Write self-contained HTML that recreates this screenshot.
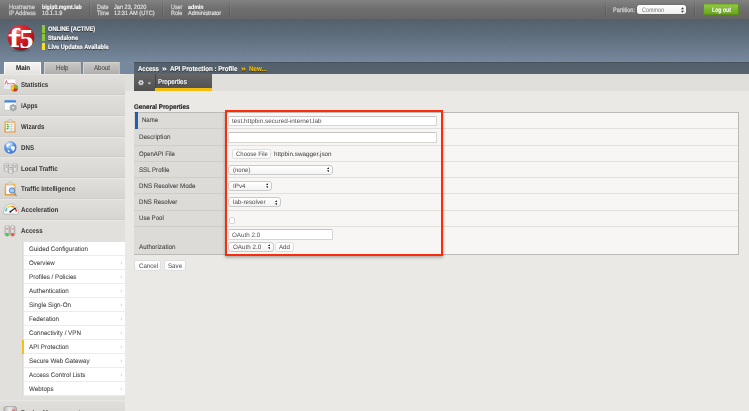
<!DOCTYPE html>
<html>
<head>
<meta charset="utf-8">
<title>BIG-IP - API Protection Profile</title>
<style>
html,body{margin:0;padding:0;}
html{width:749px;height:411px;overflow:hidden;background:#ebe9e6;}
body{width:749px;height:411px;overflow:hidden;position:relative;background:#ebe9e6;font-family:"Liberation Sans",Arial,sans-serif;font-size:6.5px;color:#333;}
*{box-sizing:border-box;}
.abs{position:absolute;}
#txl{position:absolute;left:0;top:0;width:749px;height:411px;will-change:transform;filter:blur(0.3px);}
#txl2{position:absolute;left:0;top:0;width:749px;height:411px;will-change:transform;transform:translateY(0.5px);}
.tx{text-rendering:geometricPrecision;-webkit-text-stroke:0.06px currentColor;position:absolute;white-space:nowrap;line-height:10px;height:10px;transform-origin:0 50%;}
#topbar{left:0;top:0;width:749px;height:20px;background:linear-gradient(#828282,#6f6f6f 45%,#666 100%);border-bottom:1px solid #5b5f64;}
.sep{position:absolute;top:2px;height:15px;width:2px;border-left:1px solid rgba(0,0,0,.1);border-right:1px solid rgba(255,255,255,.05);}
#header{left:0;top:20px;width:749px;height:55px;background:linear-gradient(#54606c 0,#5f6e7d 30%,#77899e 77%);}
#header .tex{position:absolute;left:0;top:0;right:0;bottom:0;background:repeating-linear-gradient(135deg,rgba(255,255,255,0.009) 0,rgba(255,255,255,0.009) 1px,rgba(0,0,0,0.009) 1px,rgba(0,0,0,0.009) 2px);}
.sb{position:absolute;left:42.1px;width:2.7px;}
.tab{position:absolute;top:62.3px;height:12.6px;width:37.2px;background:linear-gradient(#c9c8c5,#adacaa);border:1px solid #d3d2cf;border-bottom:none;border-right-color:#c0bfbc;}
.tab.act{background:linear-gradient(#f6f5f3,#e2e0dd);border-color:#fbfbfa;height:12.6px;}
#crumb{left:133.8px;top:62px;width:616px;height:12.4px;background:linear-gradient(#535f6b,#57636f);border-top:1px solid #48525d;}
#sidebar{left:0;top:74.4px;width:125px;height:337px;background:#dcdad6;}
.mi{position:absolute;left:0;width:125px;border-top:1px solid #e8e7e4;border-bottom:1px solid #d0ceca;background:linear-gradient(#e1dfdc,#d7d5d1);}
.mi.act{background:#e2e0dd;border-bottom:none;}
#sub{left:23.6px;top:241.6px;width:101.4px;height:154.2px;background:#fff;box-shadow:-1px 0 0 #e6e5e2,-2px 0 0 #dad8d4;}
.si{position:absolute;left:23.6px;width:101.4px;height:14.03px;border-bottom:1px solid #edecea;}
#menubar{left:133.8px;top:74.4px;width:78.2px;height:16.8px;background:linear-gradient(#666,#4f4f4f);}
.row{position:absolute;left:134px;width:604.4px;background:linear-gradient(90deg,#dddbd8 0,#dddbd8 91.5px,#cfcdca 91.5px,#cfcdca 92.3px,#f7f6f4 92.3px);}
.rb{position:absolute;left:134px;width:604.4px;height:1px;background:linear-gradient(90deg,#d0ceca 0,#d0ceca 92px,#e2e0dc 92px);}
.inp{position:absolute;background:#fff;border:1px solid #d7d5d2;border-top-color:#c6c4c1;border-radius:1.5px;}
.sel{position:absolute;background:linear-gradient(#fff,#f3f3f3);border:1px solid #c9c9c9;border-radius:3px;}
.ud{position:absolute;right:2.4px;top:1.3px;width:2.7px;height:5.4px;}
.btn{position:absolute;background:linear-gradient(#fff,#f9f9f9);border:1px solid #dedede;border-radius:2.5px;}
</style>
</head>
<body>

<!-- top bar -->
<div id="topbar" class="abs">
  <div class="sep" style="left:88.5px"></div>
  <div class="sep" style="left:162px"></div>
  <div class="sep" style="left:229px"></div>
  <div class="sep" style="left:604.7px"></div>
  <div class="sep" style="left:694.3px"></div>
  <div class="abs" style="left:637px;top:5.2px;width:49.2px;height:9px;background:linear-gradient(#fff,#efefef);border-radius:2.5px;box-shadow:0 0 1px #333">
    <svg class="abs" style="right:2.2px;top:1.6px" width="3" height="6" viewBox="0 0 3 6"><path d="M0 2.3L1.5 0.3L3 2.3zM0 3.7L1.5 5.7L3 3.7z" fill="#333"/></svg>
  </div>
  <div class="abs" style="left:702.8px;top:4.4px;width:36.6px;height:10.2px;background:linear-gradient(#8fc742,#69a51d);border:1px solid #5a8f18;border-top-color:#7db32e;border-radius:1.5px;"></div>
</div>

<!-- header -->
<div id="header" class="abs"><div class="tex"></div></div>

<!-- logo -->
<svg class="abs" style="left:2px;top:20px" width="40" height="36" viewBox="2 20 40 36">
  <defs>
    <radialGradient id="lg" cx="36%" cy="26%" r="80%">
      <stop offset="0" stop-color="#f27a82"/>
      <stop offset="0.28" stop-color="#de2a37"/>
      <stop offset="0.7" stop-color="#c0141f"/>
      <stop offset="1" stop-color="#840a12"/>
    </radialGradient>
    <radialGradient id="sh" cx="50%" cy="50%" r="50%">
      <stop offset="0" stop-color="#1a2430" stop-opacity="0.55"/>
      <stop offset="1" stop-color="#1a2430" stop-opacity="0"/>
    </radialGradient>
    <clipPath id="ball"><ellipse cx="21" cy="37.5" rx="13.3" ry="12.8"/></clipPath>
  </defs>
  <ellipse cx="21" cy="50.2" rx="11" ry="2.6" fill="url(#sh)"/>
  <ellipse cx="21" cy="37.5" rx="13.3" ry="12.8" fill="url(#lg)"/>
  <g clip-path="url(#ball)" fill="#fff">
    <text x="9.6" y="47" font-family="Liberation Serif,serif" font-weight="bold" font-size="27" textLength="10.5" lengthAdjust="spacingAndGlyphs">f</text>
    <rect x="8.6" y="34.3" width="12" height="2.1"/>
    <rect x="10.4" y="45.6" width="8.6" height="1.5"/>
    <text x="19.6" y="48" font-family="Liberation Serif,serif" font-weight="bold" font-size="26.5" textLength="14" lengthAdjust="spacingAndGlyphs">5</text>
  </g>
</svg>

<!-- status -->
<div class="sb" style="top:25px;height:7.5px;background:#8cc63f"></div>
<div class="sb" style="top:33.9px;height:6.8px;background:#8cc63f"></div>
<div class="sb" style="top:43px;height:6.8px;background:#f5e21a"></div>

<!-- tabs -->
<div class="tab act" style="left:4px"></div>
<div class="tab" style="left:43.7px"></div>
<div class="tab" style="left:83.2px"></div>

<!-- breadcrumb -->
<div id="crumb" class="abs"></div>

<div class="abs" style="left:125px;top:74.4px;width:624px;height:16.7px;background:#e1dfdc"></div>
<!-- sidebar -->
<div id="sidebar" class="abs"></div>
<div class="mi" style="top:74.4px;height:20.8px"></div>
<div class="mi" style="top:95.2px;height:20.8px"></div>
<div class="mi" style="top:116.0px;height:20.8px"></div>
<div class="mi" style="top:136.8px;height:20.6px"></div>
<div class="mi" style="top:157.4px;height:20.6px"></div>
<div class="mi" style="top:178.0px;height:20.8px"></div>
<div class="mi" style="top:198.8px;height:20.8px"></div>
<div class="mi act" style="top:219.6px;height:180.4px"></div>
<div class="mi" style="top:400px;height:21px"></div>

<div id="sub" class="abs"></div>
<div class="si" style="top:241.70px"></div>
<div class="si" style="top:255.70px"></div>
<svg class="abs" style="left:119.8px;top:260.90px" width="3" height="4" viewBox="0 0 3 4"><path d="M0.9 0.8L2 2L0.9 3.2" stroke="#bdbdbd" stroke-width="0.65" fill="none"/></svg>
<div class="si" style="top:269.70px"></div>
<svg class="abs" style="left:119.8px;top:274.90px" width="3" height="4" viewBox="0 0 3 4"><path d="M0.9 0.8L2 2L0.9 3.2" stroke="#bdbdbd" stroke-width="0.65" fill="none"/></svg>
<div class="si" style="top:283.70px"></div>
<svg class="abs" style="left:119.8px;top:288.90px" width="3" height="4" viewBox="0 0 3 4"><path d="M0.9 0.8L2 2L0.9 3.2" stroke="#bdbdbd" stroke-width="0.65" fill="none"/></svg>
<div class="si" style="top:297.70px"></div>
<svg class="abs" style="left:119.8px;top:302.90px" width="3" height="4" viewBox="0 0 3 4"><path d="M0.9 0.8L2 2L0.9 3.2" stroke="#bdbdbd" stroke-width="0.65" fill="none"/></svg>
<div class="si" style="top:311.70px"></div>
<svg class="abs" style="left:119.8px;top:316.90px" width="3" height="4" viewBox="0 0 3 4"><path d="M0.9 0.8L2 2L0.9 3.2" stroke="#bdbdbd" stroke-width="0.65" fill="none"/></svg>
<div class="si" style="top:325.70px"></div>
<svg class="abs" style="left:119.8px;top:330.90px" width="3" height="4" viewBox="0 0 3 4"><path d="M0.9 0.8L2 2L0.9 3.2" stroke="#bdbdbd" stroke-width="0.65" fill="none"/></svg>
<div class="si" style="top:339.70px"></div>
<svg class="abs" style="left:119.8px;top:344.90px" width="3" height="4" viewBox="0 0 3 4"><path d="M0.9 0.8L2 2L0.9 3.2" stroke="#bdbdbd" stroke-width="0.65" fill="none"/></svg>
<div class="si" style="top:353.70px"></div>
<svg class="abs" style="left:119.8px;top:358.90px" width="3" height="4" viewBox="0 0 3 4"><path d="M0.9 0.8L2 2L0.9 3.2" stroke="#bdbdbd" stroke-width="0.65" fill="none"/></svg>
<div class="si" style="top:367.70px"></div>
<svg class="abs" style="left:119.8px;top:372.90px" width="3" height="4" viewBox="0 0 3 4"><path d="M0.9 0.8L2 2L0.9 3.2" stroke="#bdbdbd" stroke-width="0.65" fill="none"/></svg>
<div class="si" style="top:381.70px"></div>
<svg class="abs" style="left:119.8px;top:386.90px" width="3" height="4" viewBox="0 0 3 4"><path d="M0.9 0.8L2 2L0.9 3.2" stroke="#bdbdbd" stroke-width="0.65" fill="none"/></svg>

<div class="abs" style="left:21.5px;top:340.3px;width:2.2px;height:13.5px;background:#f5bf1a"></div>
<!-- icons -->
<svg class="abs" style="left:0;top:74px" width="24" height="337" viewBox="0 74 24 337">
  <defs>
    <linearGradient id="gsrv" x1="0" y1="0" x2="1" y2="0"><stop offset="0" stop-color="#b9b9b9"/><stop offset="0.45" stop-color="#ececec"/><stop offset="1" stop-color="#b4b4b4"/></linearGradient>
    <radialGradient id="gglobe" cx="40%" cy="30%" r="75%"><stop offset="0" stop-color="#b9d5f8"/><stop offset="0.5" stop-color="#5c95e3"/><stop offset="1" stop-color="#3a70c8"/></radialGradient>
    <linearGradient id="gclip" x1="0" y1="0" x2="0" y2="1"><stop offset="0" stop-color="#f6b75a"/><stop offset="1" stop-color="#e8932a"/></linearGradient>
  </defs>
  <!-- Statistics -->
  <rect x="3.9" y="79" width="12" height="10" rx="0.8" fill="#fdfdfd" stroke="#c9c9c9" stroke-width="0.6"/>
  <rect x="4.6" y="85.2" width="10.6" height="2.6" fill="#dfe9f6"/>
  <path d="M5 84.6L6.4 80.6L7.6 84.2L9 83.4L10.2 84.2L11.6 83.2L13 83.8L14.6 83.2" fill="none" stroke="#e0323a" stroke-width="0.7"/>
  <circle cx="14.4" cy="87.9" r="3.5" fill="#d5252d"/>
  <path d="M14.4 87.9L14.4 84.4A3.5 3.5 0 0 1 17.9 87.9L16.2 88.9z" fill="#6dbf3a"/>
  <path d="M14.4 87.9L13 91.1A3.5 3.5 0 0 1 14.4 84.4z" fill="#f4c81f"/>
  <!-- iApps -->
  <rect x="4.4" y="100.3" width="11.6" height="9.8" rx="0.8" fill="#fdfdfd" stroke="#c4c4c4" stroke-width="0.6"/>
  <path d="M4.4 101.1a0.8 0.8 0 0 1 0.8 -0.8h10a0.8 0.8 0 0 1 0.8 0.8v1.4h-11.6z" fill="#3f86dd"/>
  <g transform="translate(13.1 107.6)">
    <g stroke="#9aa1a6" stroke-width="1.7"><path d="M0 -3.6V3.6M-3.6 0H3.6M-2.55 -2.55L2.55 2.55M2.55 -2.55L-2.55 2.55"/></g>
    <circle r="2.7" fill="#a4abb0"/><circle r="1.1" fill="#e8eaec"/>
  </g>
  <!-- Wizards -->
  <rect x="4.4" y="121" width="11.2" height="11.6" rx="1.2" fill="url(#gclip)"/>
  <rect x="5.9" y="122.8" width="8.4" height="8.6" fill="#fafbfd"/>
  <rect x="8.2" y="119.6" width="3.8" height="2.8" rx="0.8" fill="#d9d9d9" stroke="#aaa" stroke-width="0.4"/>
  <g stroke="#b9c6dc" stroke-width="0.6"><path d="M9 124.6h4.6M9 126.6h4.6M9 128.6h4.6M9 130.2h4.6M11.4 123.4v7.6"/></g>
  <g fill="#4fb233"><rect x="6.6" y="123.8" width="1.9" height="1.5"/><rect x="7" y="125.9" width="1.9" height="1.5"/><rect x="6.6" y="128" width="1.9" height="1.5"/></g>
  <!-- DNS -->
  <circle cx="10.3" cy="147.5" r="6.2" fill="url(#gglobe)"/>
  <path d="M6.2 144.8c1-1.2 2.4-1.6 3.6-1.2c0.6 0.8-0.4 1.6-1.2 2c-0.6 0.8 0.4 1.6-0.4 2.4c-1 0-1.8-1.4-2-3.2zM11.2 146.2c1.2-0.6 2.6-0.2 3.6 0.8c0.4 1.6-0.4 3.2-1.6 4.2c-0.8 0.2-0.6-1.2-1.4-1.8c-1-0.6-1.4-2.2-0.6-3.2zM7.6 150.4c0.8-0.4 1.8 0 2.2 0.8c-0.2 0.8-1 1.2-1.8 0.8z" fill="#f2f7fd"/>
  <ellipse cx="9.3" cy="143.8" rx="3.6" ry="1.8" fill="#fff" opacity="0.35"/>
  <!-- Local Traffic -->
  <g stroke="#a3a3a3" stroke-width="0.45">
    <rect x="4" y="163.4" width="4.9" height="8.2" rx="1.5" fill="url(#gsrv)"/>
    <rect x="12.6" y="163.4" width="4.9" height="8.2" rx="1.5" fill="url(#gsrv)"/>
    <rect x="8.3" y="165" width="4.9" height="8.4" rx="1.5" fill="url(#gsrv)"/>
  </g>
  <g><rect x="5.7" y="165.4" width="1.5" height="0.8" fill="#e0564e"/><rect x="5.7" y="166.9" width="1.5" height="0.8" fill="#7cc24a"/>
  <rect x="14.3" y="165.4" width="1.5" height="0.8" fill="#e0564e"/><rect x="14.3" y="166.9" width="1.5" height="0.8" fill="#7cc24a"/>
  <rect x="10" y="167.2" width="1.5" height="0.8" fill="#e0564e"/><rect x="10" y="168.7" width="1.5" height="0.8" fill="#7cc24a"/></g>
  <!-- Traffic Intelligence -->
  <rect x="4.7" y="183.6" width="10.8" height="11.8" rx="1.2" fill="url(#gclip)"/>
  <rect x="6.1" y="185.3" width="8" height="8.8" fill="#f7f9fc"/>
  <rect x="8.1" y="182" width="3.8" height="3" rx="0.9" fill="#dcdcdc" stroke="#a8a8a8" stroke-width="0.4"/>
  <path d="M13.6 192.4L16.2 195.6" stroke="#8a8f96" stroke-width="1.3" stroke-linecap="round"/>
  <circle cx="12" cy="190.5" r="2.7" fill="#a9cbf4" stroke="#4a86d6" stroke-width="1"/>
  <!-- Acceleration -->
  <path d="M3.5 213.4a7.5 9.6 0 0 1 15 0a0.7 0.7 0 0 1 -0.7 0.7h-13.6a0.7 0.7 0 0 1 -0.7 -0.7z" fill="#fbfbfb" stroke="#a9a9a9" stroke-width="0.7"/>
  <path d="M5.8 211.6a5.3 5.6 0 0 1 1.2 -3.4" fill="none" stroke="#3fc1c4" stroke-width="1.5"/>
  <path d="M7.3 207.8a5.3 5.6 0 0 1 3.4 -1.5" fill="none" stroke="#f1d21e" stroke-width="1.5"/>
  <path d="M11.2 206.3a5.3 5.6 0 0 1 3.4 1.3" fill="none" stroke="#f08a1c" stroke-width="1.5"/>
  <path d="M14.9 207.9a5.3 5.6 0 0 1 1.5 3.7" fill="none" stroke="#e02828" stroke-width="1.5"/>
  <path d="M10.2 211.8L15 208.2" stroke="#222" stroke-width="1.1" stroke-linecap="round"/>
  <circle cx="10.4" cy="211.7" r="0.9" fill="#222"/>
  <!-- Access -->
  <g stroke="#9b9b9b" stroke-width="0.45">
    <rect x="4.9" y="225.6" width="4.6" height="10.2" rx="1.6" fill="url(#gsrv)"/>
    <rect x="10.4" y="225.6" width="4.6" height="10.2" rx="1.6" fill="url(#gsrv)"/>
  </g>
  <rect x="6.5" y="228" width="1.4" height="0.7" fill="#e0564e"/><rect x="6.5" y="229.4" width="1.4" height="0.7" fill="#7cc24a"/>
  <rect x="12" y="228" width="1.4" height="0.7" fill="#e0564e"/><rect x="12" y="229.4" width="1.4" height="0.7" fill="#7cc24a"/>
  <circle cx="7.1" cy="234.6" r="1.8" fill="#5cc24a"/>
  <circle cx="12.6" cy="234.6" r="1.8" fill="#ee5a55"/>
  <!-- Device Management (cropped) -->
  <rect x="4" y="406.6" width="12.4" height="8" rx="1.6" fill="url(#gsrv)" stroke="#8f8f8f" stroke-width="0.6"/>
  <rect x="12.2" y="409.6" width="2.6" height="1.2" fill="#e0564e"/>
</svg>

<!-- menu bar -->
<div id="menubar" class="abs">
  <div class="abs" style="left:21.3px;top:0;width:1px;height:16.8px;background:#444"></div>
  <div class="abs" style="left:21.5px;top:13.9px;width:56.7px;height:2.9px;background:#f3bf0c"></div>
  <svg class="abs" style="left:3.3px;top:4px" width="16" height="10" viewBox="0 0 16 10">
    <g stroke="#dcdcdc" stroke-width="1.1"><path d="M4 1.9V7.3M1.3 4.6H6.7M2.1 2.7L5.9 6.5M5.9 2.7L2.1 6.5"/></g>
    <circle cx="4" cy="4.6" r="1.95" fill="#dcdcdc"/>
    <circle cx="4" cy="4.6" r="0.9" fill="#5a5a5a"/>
    <path d="M10.6 4.6L14.2 4.6L12.4 6.6z" fill="#d6d6d6"/>
  </svg>
</div>

<!-- table -->
<div class="abs" style="left:133.5px;top:111.5px;width:605.4px;height:143.6px;border:1px solid #bcbab6;border-left-color:#a9a7a4;background:#f7f6f4"></div>
<div class="row" style="top:112.5px;height:16.0px"></div>
<div class="row" style="top:128.5px;height:16.5px"></div>
<div class="rb" style="top:128.0px"></div>
<div class="row" style="top:145.0px;height:16.4px"></div>
<div class="rb" style="top:144.5px"></div>
<div class="row" style="top:161.4px;height:16.2px"></div>
<div class="rb" style="top:160.9px"></div>
<div class="row" style="top:177.6px;height:16.2px"></div>
<div class="rb" style="top:177.1px"></div>
<div class="row" style="top:193.8px;height:16.2px"></div>
<div class="rb" style="top:193.3px"></div>
<div class="row" style="top:210.0px;height:16.3px"></div>
<div class="rb" style="top:209.5px"></div>
<div class="row" style="top:226.3px;height:28.1px"></div>
<div class="rb" style="top:225.8px"></div>

<div class="abs" style="left:134.7px;top:112.4px;width:3px;height:16.3px;background:#245fa8"></div>

<!-- form controls -->
<div class="inp" style="left:228.3px;top:115.7px;width:208.6px;height:10.6px"></div>
<div class="inp" style="left:228.3px;top:132.4px;width:208.6px;height:10.5px"></div>
<div class="btn" style="left:231.6px;top:148.7px;width:39.8px;height:9.9px"></div>
<div class="sel" style="left:228.2px;top:165px;width:104.6px;height:9.9px"><svg class="ud" viewBox="0 0 3 6"><path d="M0 2.3L1.5 0.3L3 2.3zM0 3.7L1.5 5.7L3 3.7z" fill="#222"/></svg></div>
<div class="sel" style="left:228.2px;top:181.1px;width:43.4px;height:9.9px"><svg class="ud" viewBox="0 0 3 6"><path d="M0 2.3L1.5 0.3L3 2.3zM0 3.7L1.5 5.7L3 3.7z" fill="#222"/></svg></div>
<div class="sel" style="left:228.4px;top:197.3px;width:52.2px;height:10px"><svg class="ud" viewBox="0 0 3 6"><path d="M0 2.3L1.5 0.3L3 2.3zM0 3.7L1.5 5.7L3 3.7z" fill="#222"/></svg></div>
<div class="abs" style="left:228.5px;top:217px;width:6.4px;height:6.5px;background:#fff;border:1px solid #d2d2d2;border-radius:1.5px"></div>
<div class="inp" style="left:228.4px;top:229.4px;width:104.2px;height:10.8px"></div>
<div class="sel" style="left:228.4px;top:242px;width:45.4px;height:9.5px"><svg class="ud" viewBox="0 0 3 6"><path d="M0 2.3L1.5 0.3L3 2.3zM0 3.7L1.5 5.7L3 3.7z" fill="#222"/></svg></div>
<div class="btn" style="left:275.1px;top:242px;width:19.4px;height:9.5px"></div>

<!-- red highlight -->
<div class="abs" style="left:225px;top:110px;width:217.6px;height:146px;border:2px solid #fb2c0a;box-shadow:0 1.5px 3px rgba(0,0,0,.3)"></div>

<!-- buttons -->
<div class="btn" style="left:134.4px;top:260.3px;width:26.9px;height:10.4px"></div>
<div class="btn" style="left:164.1px;top:260.3px;width:21.5px;height:10.4px"></div>

<!-- texts -->
<div id="txl">
<span id="t0" class="tx" style="left:9.20px;top:3.00px;font-size:6.2px;font-weight:normal;color:#cdcdcd;transform:scaleX(0.9148);-webkit-text-stroke-width:0.3px;">Hostname</span>
<span id="t1" class="tx" style="left:9.20px;top:9.00px;font-size:6.2px;font-weight:normal;color:#cdcdcd;transform:scaleX(0.8956);-webkit-text-stroke-width:0.3px;">IP Address</span>
<span id="t2" class="tx" style="left:41.70px;top:3.00px;font-size:6.2px;font-weight:bold;color:#fff;transform:scaleX(0.8387);-webkit-text-stroke-width:0.08px;">bigip0.mgmt.lab</span>
<span id="t3" class="tx" style="left:41.70px;top:9.00px;font-size:6.2px;font-weight:normal;color:#e3e3e3;transform:scaleX(0.9117);-webkit-text-stroke-width:0.16px;">10.1.1.9</span>
<span id="t4" class="tx" style="left:97.40px;top:3.00px;font-size:6.2px;font-weight:normal;color:#cdcdcd;transform:scaleX(0.8870);-webkit-text-stroke-width:0.3px;">Date</span>
<span id="t5" class="tx" style="left:97.40px;top:9.00px;font-size:6.2px;font-weight:normal;color:#cdcdcd;transform:scaleX(0.8868);-webkit-text-stroke-width:0.3px;">Time</span>
<span id="t6" class="tx" style="left:114.40px;top:3.00px;font-size:6.2px;font-weight:normal;color:#e3e3e3;transform:scaleX(0.9027);-webkit-text-stroke-width:0.16px;">Jan 23, 2020</span>
<span id="t7" class="tx" style="left:114.40px;top:9.00px;font-size:6.2px;font-weight:normal;color:#e3e3e3;transform:scaleX(0.9105);-webkit-text-stroke-width:0.16px;">12:31 AM (UTC)</span>
<span id="t8" class="tx" style="left:171.10px;top:3.00px;font-size:6.2px;font-weight:normal;color:#cdcdcd;transform:scaleX(0.8717);-webkit-text-stroke-width:0.3px;">User</span>
<span id="t9" class="tx" style="left:171.10px;top:9.00px;font-size:6.2px;font-weight:normal;color:#cdcdcd;transform:scaleX(0.8952);-webkit-text-stroke-width:0.3px;">Role</span>
<span id="t10" class="tx" style="left:187.70px;top:3.00px;font-size:6.2px;font-weight:bold;color:#fff;transform:scaleX(0.8500);-webkit-text-stroke-width:0.08px;">admin</span>
<span id="t11" class="tx" style="left:187.70px;top:9.00px;font-size:6.2px;font-weight:normal;color:#e3e3e3;transform:scaleX(0.9080);-webkit-text-stroke-width:0.16px;">Administrator</span>
<span id="t12" class="tx" style="left:613.00px;top:6.00px;font-size:6.4px;font-weight:normal;color:#cdcdcd;transform:scaleX(0.8718);-webkit-text-stroke-width:0.3px;">Partition:</span>
<span id="t13" class="tx" style="left:642.00px;top:6.00px;font-size:6.4px;font-weight:normal;color:#777;transform:scaleX(0.8482);-webkit-text-stroke-width:0;">Common</span>
<span id="t14" class="tx" style="left:711.80px;top:6.00px;font-size:6.6px;font-weight:bold;color:#fff;transform:scaleX(0.7860);text-shadow:0 0 1px rgba(0,0,0,.45);-webkit-text-stroke-width:0.18px;">Log out</span>
<span id="t15" class="tx" style="left:47.60px;top:25.00px;font-size:6.5px;font-weight:bold;color:#fff;transform:scaleX(0.8656);text-shadow:0 0.5px 1px rgba(0,0,0,.7),0 0 1px rgba(0,0,0,.4);-webkit-text-stroke-width:0.18px;">ONLINE (ACTIVE)</span>
<span id="t16" class="tx" style="left:47.60px;top:34.00px;font-size:6.5px;font-weight:bold;color:#fff;transform:scaleX(0.8560);text-shadow:0 0.5px 1px rgba(0,0,0,.7),0 0 1px rgba(0,0,0,.4);-webkit-text-stroke-width:0.18px;">Standalone</span>
<span id="t17" class="tx" style="left:47.60px;top:43.00px;font-size:6.5px;font-weight:bold;color:#fff;transform:scaleX(0.8617);text-shadow:0 0.5px 1px rgba(0,0,0,.7),0 0 1px rgba(0,0,0,.4);-webkit-text-stroke-width:0.18px;">Live Updates Available</span>
<span id="t18" class="tx" style="left:15.90px;top:64.00px;font-size:7px;font-weight:bold;color:#111;transform:scaleX(0.8838);-webkit-text-stroke-width:0;">Main</span>
<span id="t19" class="tx" style="left:55.90px;top:64.00px;font-size:7px;font-weight:normal;color:#444;transform:scaleX(0.8677);">Help</span>
<span id="t20" class="tx" style="left:93.80px;top:64.00px;font-size:7px;font-weight:normal;color:#444;transform:scaleX(0.8690);">About</span>
<span id="t21" class="tx" style="left:137.50px;top:65.00px;font-size:6.9px;font-weight:bold;color:#fff;transform:scaleX(0.8658);text-shadow:0 0.5px 1px rgba(0,0,0,.7),0 0 1px rgba(0,0,0,.4);-webkit-text-stroke-width:0.18px;">Access</span>
<span id="t22" class="tx" style="left:162.00px;top:65.00px;font-size:6.9px;font-weight:bold;color:#fff;transform:scaleX(1.2228);text-shadow:0 0.5px 1px rgba(0,0,0,.7),0 0 1px rgba(0,0,0,.4);-webkit-text-stroke-width:0.18px;">»</span>
<span id="t23" class="tx" style="left:170.00px;top:65.00px;font-size:6.9px;font-weight:bold;color:#fff;transform:scaleX(0.8994);text-shadow:0 0.5px 1px rgba(0,0,0,.7),0 0 1px rgba(0,0,0,.4);-webkit-text-stroke-width:0.18px;">API Protection : Profile</span>
<span id="t24" class="tx" style="left:241.00px;top:65.00px;font-size:6.9px;font-weight:bold;color:#f5c518;transform:scaleX(1.3008);text-shadow:0 0.5px 1px rgba(0,0,0,.7),0 0 1px rgba(0,0,0,.4);-webkit-text-stroke-width:0.15px;">»</span>
<span id="t25" class="tx" style="left:249.00px;top:65.00px;font-size:6.9px;font-weight:bold;color:#f5c518;transform:scaleX(0.9005);text-shadow:0 0.5px 1px rgba(0,0,0,.7),0 0 1px rgba(0,0,0,.4);-webkit-text-stroke-width:0.15px;">New...</span>
<span id="t26" class="tx" style="left:157.80px;top:78.00px;font-size:6.8px;font-weight:normal;color:#fff;transform:scaleX(0.9295);text-shadow:0 0.5px 1px rgba(0,0,0,.7),0 0 1px rgba(0,0,0,.4);-webkit-text-stroke-width:0.22px;">Properties</span>
<span id="t27" class="tx" style="left:20.90px;top:81.00px;font-size:7px;font-weight:bold;color:#333;transform:scaleX(0.8739);-webkit-text-stroke-width:0;">Statistics</span>
<span id="t28" class="tx" style="left:20.90px;top:102.00px;font-size:7px;font-weight:bold;color:#333;transform:scaleX(0.8585);-webkit-text-stroke-width:0;">iApps</span>
<span id="t32" class="tx" style="left:20.80px;top:185.00px;font-size:7px;font-weight:bold;color:#333;transform:scaleX(0.8866);-webkit-text-stroke-width:0;">Traffic Intelligence</span>
<span id="t33" class="tx" style="left:20.80px;top:206.00px;font-size:7px;font-weight:bold;color:#333;transform:scaleX(0.8898);-webkit-text-stroke-width:0;">Acceleration</span>
<span id="t34" class="tx" style="left:20.80px;top:227.00px;font-size:7px;font-weight:bold;color:#333;transform:scaleX(0.8805);-webkit-text-stroke-width:0;">Access</span>
<span id="t35" class="tx" style="left:20.80px;top:409.00px;font-size:7px;font-weight:bold;color:#333;transform:scaleX(0.8869);-webkit-text-stroke-width:0;">Device Management</span>
<span id="t47" class="tx" style="left:134.30px;top:103.00px;font-size:6.8px;font-weight:bold;color:#222;transform:scaleX(0.9124);-webkit-text-stroke-width:0.12px;">General Properties</span>
<span id="t48" class="tx" style="left:141.70px;top:116.00px;font-size:6.6px;font-weight:normal;color:#3d3d3d;transform:scaleX(0.9151);">Name</span>
<span id="t49" class="tx" style="left:138.50px;top:133.00px;font-size:6.6px;font-weight:normal;color:#3d3d3d;transform:scaleX(0.9550);">Description</span>
<span id="t50" class="tx" style="left:138.50px;top:150.00px;font-size:6.6px;font-weight:normal;color:#3d3d3d;transform:scaleX(0.9154);">OpenAPI File</span>
<span id="t51" class="tx" style="left:138.50px;top:166.00px;font-size:6.6px;font-weight:normal;color:#3d3d3d;transform:scaleX(0.9282);">SSL Profile</span>
<span id="t52" class="tx" style="left:138.50px;top:182.00px;font-size:6.6px;font-weight:normal;color:#3d3d3d;transform:scaleX(0.9400);">DNS Resolver Mode</span>
<span id="t53" class="tx" style="left:138.50px;top:198.00px;font-size:6.6px;font-weight:normal;color:#3d3d3d;transform:scaleX(0.9191);">DNS Resolver</span>
<span id="t54" class="tx" style="left:138.50px;top:214.00px;font-size:6.6px;font-weight:normal;color:#3d3d3d;transform:scaleX(0.9266);">Use Pool</span>
<span id="t55" class="tx" style="left:138.50px;top:243.00px;font-size:6.6px;font-weight:normal;color:#3d3d3d;transform:scaleX(0.9481);">Authorization</span>
<span id="t56" class="tx" style="left:232.10px;top:117.00px;font-size:6.3px;font-weight:normal;color:#4d4d4d;transform:scaleX(1.0145);-webkit-text-stroke-width:0;">test.httpbin.secured-internet.lab</span>
<span id="t57" class="tx" style="left:235.60px;top:150.00px;font-size:6.3px;font-weight:normal;color:#4d4d4d;transform:scaleX(0.9491);-webkit-text-stroke-width:0;">Choose File</span>
<span id="t58" class="tx" style="left:273.60px;top:150.00px;font-size:6.3px;font-weight:normal;color:#383838;transform:scaleX(1.0031);-webkit-text-stroke-width:0;">httpbin.swagger.json</span>
<span id="t59" class="tx" style="left:232.90px;top:166.00px;font-size:6.3px;font-weight:normal;color:#4d4d4d;transform:scaleX(0.9559);-webkit-text-stroke-width:0;">(none)</span>
<span id="t60" class="tx" style="left:232.90px;top:182.00px;font-size:6.3px;font-weight:normal;color:#4d4d4d;transform:scaleX(0.9913);-webkit-text-stroke-width:0;">IPv4</span>
<span id="t61" class="tx" style="left:233.20px;top:198.00px;font-size:6.3px;font-weight:normal;color:#4d4d4d;transform:scaleX(0.9907);-webkit-text-stroke-width:0;">lab-resolver</span>
<span id="t62" class="tx" style="left:232.00px;top:231.00px;font-size:6.3px;font-weight:normal;color:#4d4d4d;transform:scaleX(0.9909);-webkit-text-stroke-width:0;">OAuth 2.0</span>
<span id="t63" class="tx" style="left:233.20px;top:243.00px;font-size:6.3px;font-weight:normal;color:#4d4d4d;transform:scaleX(0.9909);-webkit-text-stroke-width:0;">OAuth 2.0</span>
<span id="t64" class="tx" style="left:278.90px;top:243.00px;font-size:6.3px;font-weight:normal;color:#4d4d4d;transform:scaleX(0.9805);-webkit-text-stroke-width:0;">Add</span>
<span id="t65" class="tx" style="left:138.50px;top:262.00px;font-size:6.5px;font-weight:normal;color:#484848;transform:scaleX(0.9390);-webkit-text-stroke-width:0;">Cancel</span>
<span id="t66" class="tx" style="left:167.70px;top:262.00px;font-size:6.5px;font-weight:normal;color:#484848;transform:scaleX(0.9509);-webkit-text-stroke-width:0;">Save</span>
</div>
<div id="txl2">
<span id="t29" class="tx" style="left:20.90px;top:122.00px;font-size:7px;font-weight:bold;color:#333;transform:scaleX(0.8700);-webkit-text-stroke-width:0;">Wizards</span>
<span id="t30" class="tx" style="left:20.90px;top:143.00px;font-size:7px;font-weight:bold;color:#333;transform:scaleX(0.8795);-webkit-text-stroke-width:0;">DNS</span>
<span id="t31" class="tx" style="left:20.80px;top:164.00px;font-size:7px;font-weight:bold;color:#333;transform:scaleX(0.8876);-webkit-text-stroke-width:0;">Local Traffic</span>
<span id="t36" class="tx" style="left:29.10px;top:244.00px;font-size:6.6px;font-weight:normal;color:#3c3c3c;transform:scaleX(0.9450);-webkit-text-stroke-width:0.05px;">Guided Configuration</span>
<span id="t37" class="tx" style="left:29.10px;top:258.00px;font-size:6.6px;font-weight:normal;color:#3c3c3c;transform:scaleX(0.9314);-webkit-text-stroke-width:0.05px;">Overview</span>
<span id="t38" class="tx" style="left:29.10px;top:272.00px;font-size:6.6px;font-weight:normal;color:#3c3c3c;transform:scaleX(0.9459);-webkit-text-stroke-width:0.05px;">Profiles / Policies</span>
<span id="t39" class="tx" style="left:29.10px;top:286.00px;font-size:6.6px;font-weight:normal;color:#3c3c3c;transform:scaleX(0.9522);-webkit-text-stroke-width:0.05px;">Authentication</span>
<span id="t40" class="tx" style="left:29.10px;top:300.00px;font-size:6.6px;font-weight:normal;color:#3c3c3c;transform:scaleX(0.9468);-webkit-text-stroke-width:0.05px;">Single Sign-On</span>
<span id="t41" class="tx" style="left:29.10px;top:314.00px;font-size:6.6px;font-weight:normal;color:#3c3c3c;transform:scaleX(0.9514);-webkit-text-stroke-width:0.05px;">Federation</span>
<span id="t42" class="tx" style="left:29.10px;top:328.00px;font-size:6.6px;font-weight:normal;color:#3c3c3c;transform:scaleX(0.9442);-webkit-text-stroke-width:0.05px;">Connectivity / VPN</span>
<span id="t43" class="tx" style="left:29.10px;top:342.00px;font-size:6.6px;font-weight:normal;color:#3c3c3c;transform:scaleX(0.9441);-webkit-text-stroke-width:0.05px;">API Protection</span>
<span id="t44" class="tx" style="left:29.10px;top:356.00px;font-size:6.6px;font-weight:normal;color:#3c3c3c;transform:scaleX(0.9466);-webkit-text-stroke-width:0.05px;">Secure Web Gateway</span>
<span id="t45" class="tx" style="left:29.10px;top:370.00px;font-size:6.6px;font-weight:normal;color:#3c3c3c;transform:scaleX(0.9425);-webkit-text-stroke-width:0.05px;">Access Control Lists</span>
<span id="t46" class="tx" style="left:29.10px;top:384.00px;font-size:6.6px;font-weight:normal;color:#3c3c3c;transform:scaleX(0.9457);-webkit-text-stroke-width:0.05px;">Webtops</span>
</div>
</body>
</html>
